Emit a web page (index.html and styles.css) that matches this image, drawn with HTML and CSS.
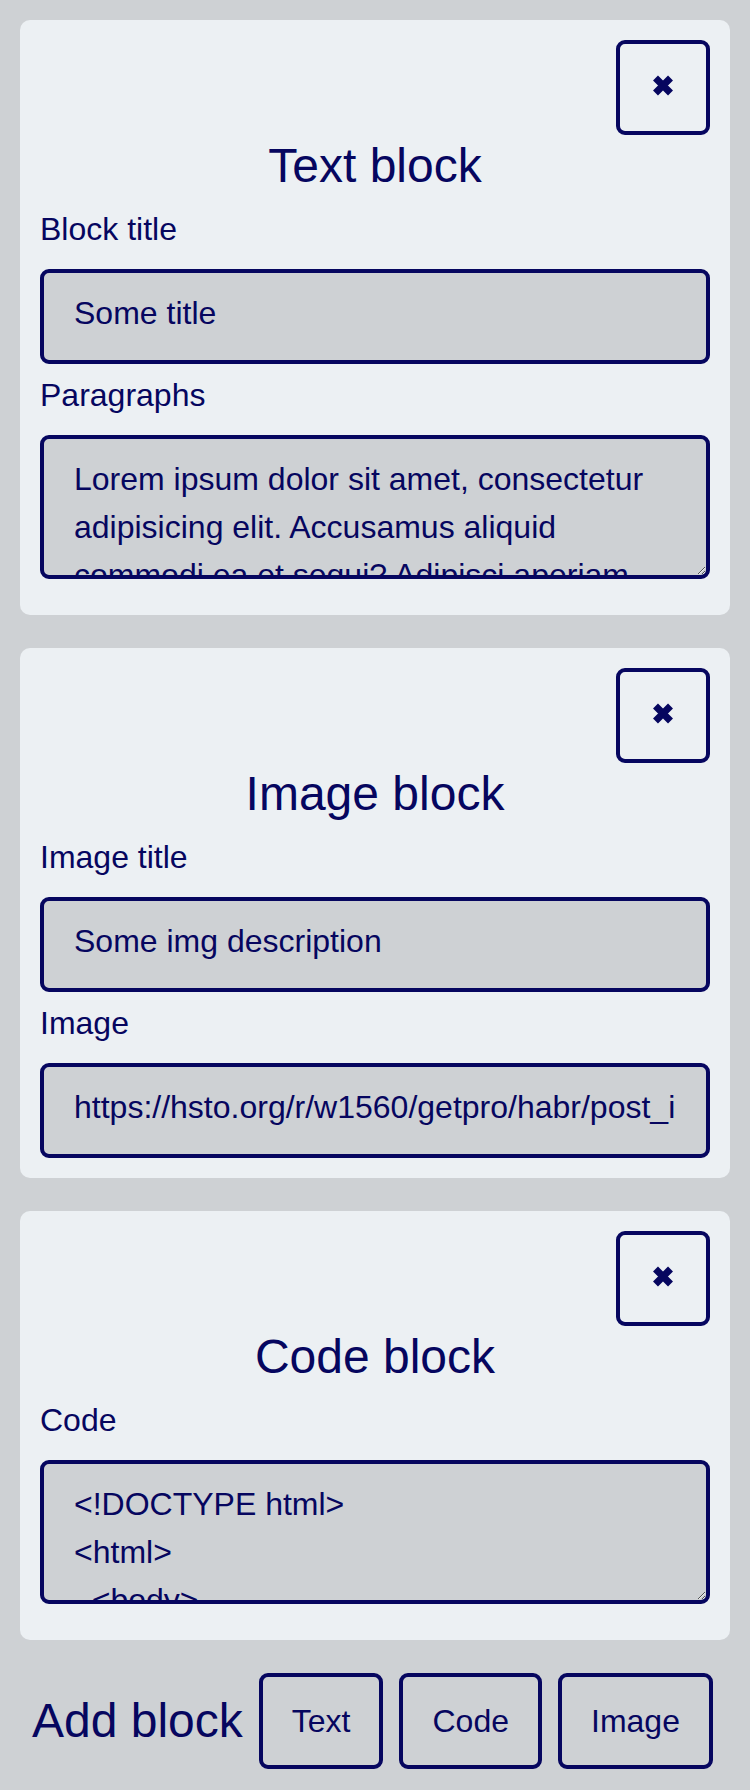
FILE: index.html
```html
<!DOCTYPE html>
<html lang="en">
<head>
<meta charset="utf-8">
<title>Blocks editor</title>
<link rel="stylesheet" href="styles.css">
</head>
<body>
<main class="editor">
  <section class="card">
    <div class="card-head">
      <button class="close-btn" type="button" aria-label="Remove block">
        <svg class="close-icon" width="22" height="21" viewBox="0 0 22 21" aria-hidden="true"><path d="M3.5 3 L18.5 18 M18.5 3 L3.5 18" stroke="currentColor" stroke-width="7" fill="none"/></svg>
      </button>
    </div>
    <h2 class="card-title">Text block</h2>
    <label class="field-label" for="t1">Block title</label>
    <input class="field-input" id="t1" type="text" value="Some title">
    <label class="field-label" for="t2">Paragraphs</label>
    <textarea class="field-area" id="t2">Lorem ipsum dolor sit amet, consectetur adipisicing elit. Accusamus aliquid commodi ea et sequi? Adipisci aperiam, atque autem cumque dolores eius esse laborum libero minima mollitia nam nisi quaerat voluptatum.</textarea>
  </section>

  <section class="card">
    <div class="card-head">
      <button class="close-btn" type="button" aria-label="Remove block">
        <svg class="close-icon" width="22" height="21" viewBox="0 0 22 21" aria-hidden="true"><path d="M3.5 3 L18.5 18 M18.5 3 L3.5 18" stroke="currentColor" stroke-width="7" fill="none"/></svg>
      </button>
    </div>
    <h2 class="card-title">Image block</h2>
    <label class="field-label" for="i1">Image title</label>
    <input class="field-input" id="i1" type="text" value="Some img description">
    <label class="field-label" for="i2">Image</label>
    <input class="field-input" id="i2" type="text" value="https://hsto.org/r/w1560/getpro/habr/post_images/6f2/a1b/7c3/6f2a1b7c3.png">
  </section>

  <section class="card">
    <div class="card-head">
      <button class="close-btn" type="button" aria-label="Remove block">
        <svg class="close-icon" width="22" height="21" viewBox="0 0 22 21" aria-hidden="true"><path d="M3.5 3 L18.5 18 M18.5 3 L3.5 18" stroke="currentColor" stroke-width="7" fill="none"/></svg>
      </button>
    </div>
    <h2 class="card-title">Code block</h2>
    <label class="field-label" for="c1">Code</label>
    <textarea class="field-area" id="c1">&lt;!DOCTYPE html&gt;
&lt;html&gt;
  &lt;body&gt;
    &lt;h1&gt;Hello&lt;/h1&gt;
  &lt;/body&gt;
&lt;/html&gt;</textarea>
  </section>

  <div class="add-row">
    <h2 class="add-title">Add block</h2>
    <button class="add-btn" type="button">Text</button>
    <button class="add-btn" type="button">Code</button>
    <button class="add-btn" type="button">Image</button>
  </div>
</main>
</body>
</html>
```

FILE: styles.css
```css
* {
  box-sizing: border-box;
}

html {
  background: #ced1d4;
}

body {
  margin: 20px;
  background: #ced1d4;
  color: #06065f;
  font-family: "Liberation Sans", Arial, sans-serif;
  font-size: 32px;
  line-height: 48px;
}

.editor {
  display: flex;
  flex-direction: column;
}

.card {
  display: flex;
  flex-direction: column;
  background: #ecf0f3;
  border-radius: 10px;
  padding: 20px;
  margin-bottom: 33px;
}

.card-head {
  display: flex;
  justify-content: flex-end;
}

.close-btn {
  width: 94px;
  height: 95px;
  padding: 0;
  margin: 0;
  border: 4px solid #06065f;
  border-radius: 9px;
  background: transparent;
  color: #06065f;
  display: flex;
  align-items: center;
  justify-content: center;
}

.close-icon {
  display: block;
  margin-bottom: 5px;
}

.card-title {
  margin: 4px 0 5px;
  font-size: 48px;
  line-height: 54px;
  font-weight: normal;
  text-align: center;
}

.field-label {
  display: block;
  margin: 7px 0 16px;
  font-size: 32px;
  line-height: 48px;
}

.field-input {
  display: block;
  width: 100%;
  height: 95px;
  margin: 0;
  padding: 0 30px 6px;
  border: 4px solid #06065f;
  border-radius: 9px;
  background: #ced1d4;
  color: #06065f;
  font-family: "Liberation Sans", Arial, sans-serif;
  font-size: 32px;
  line-height: 48px;
  outline: none;
}

.field-area {
  display: block;
  width: 100%;
  height: 144px;
  margin: 0 0 16px;
  padding: 16px 30px;
  border: 4px solid #06065f;
  border-radius: 9px;
  background: #ced1d4;
  color: #06065f;
  font-family: "Liberation Sans", Arial, sans-serif;
  font-size: 32px;
  line-height: 48px;
  overflow: hidden;
  resize: both;
  outline: none;
}

.add-row {
  display: flex;
  align-items: center;
  gap: 16px;
  padding-left: 12px;
}

.add-title {
  margin: 0;
  font-size: 48px;
  line-height: 56px;
  font-weight: normal;
}

.add-btn {
  height: 96px;
  margin: 0;
  padding: 0 29px;
  border: 4px solid #06065f;
  border-radius: 9px;
  background: transparent;
  color: #06065f;
  font-family: "Liberation Sans", Arial, sans-serif;
  font-size: 32px;
  line-height: 36px;
}
```
